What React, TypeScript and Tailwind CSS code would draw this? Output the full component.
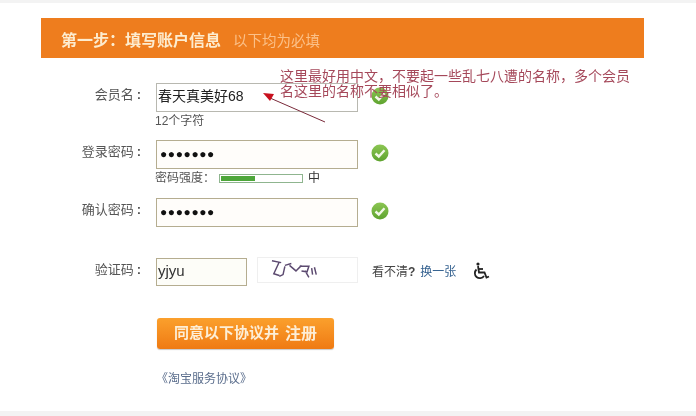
import React from "react";

const FONT = "font-['Liberation_Sans','Noto_Sans_CJK_SC',sans-serif]";

function CheckBadge() {
  return (
    <svg width="18" height="18" viewBox="0 0 18 18" className="ml-[13px] mt-[4px] shrink-0">
      <defs>
        <linearGradient id="okGreen" x1="0" y1="0" x2="0" y2="1">
          <stop offset="0" stopColor="#8cc653" />
          <stop offset="1" stopColor="#5ea32f" />
        </linearGradient>
      </defs>
      <circle cx="9" cy="9" r="8.5" fill="url(#okGreen)" />
      <path d="M4.5 9.5 L7.8 12.5 L13.5 6.3" fill="none" stroke="#f2f8e8" strokeWidth="2.4" />
    </svg>
  );
}

function Label({ text }: { text: string }) {
  return (
    <div className="mt-[2px] w-[100px] shrink-0 text-right text-[13px] leading-[20px] text-[#555]">
      {text}
      <span className="ml-[3px] font-bold">:</span>
    </div>
  );
}

function Field({ value, password, plain }: { value: string; password?: boolean; plain?: boolean }) {
  return (
    <div
      className={`ml-[15px] h-[29px] w-[202px] border pl-[1px] ${
        plain ? "border-[#b8b8b0] bg-white" : "border-[#b5ad90] bg-[#fffdfa]"
      }`}
    >
      {password ? (
        <span className="ml-[2px] text-[12px] leading-[22px] tracking-[0.6px] text-[#111]">{value}</span>
      ) : (
        <span className="text-[14px] leading-[19px] text-[#222]">{value}</span>
      )}
    </div>
  );
}

export default function App() {
  return (
    <div className={`relative flex h-[416px] w-[696px] flex-col overflow-hidden bg-white blur-[0.35px] ${FONT}`}>
      <div className="h-[3px] bg-[#f3f3f3]" />

      <div className="ml-[41px] mt-[15px] flex h-[40px] w-[603px] items-center bg-[#ee7d1e] pl-[20px] pt-[5px]">
        <span className="text-[16px] font-bold leading-[20px] text-[#fdeccf]">第一步：填写账户信息</span>
        <span className="ml-[12px] text-[14.5px] leading-[20px] text-[#fbc088]">以下均为必填</span>
      </div>

      <div className="ml-[41px] mt-[25px] flex items-start">
        <Label text="会员名" />
        <Field value="春天真美好68" plain />
        <CheckBadge />
      </div>
      <div className="ml-[155px] h-[18px] text-[12px] leading-[18px] text-[#555]">12个字符</div>

      <div className="ml-[41px] mt-[10px] flex items-start">
        <Label text="登录密码" />
        <Field value="●●●●●●●" password />
        <CheckBadge />
      </div>
      <div className="ml-[155px] mt-[1px] flex h-[16px] items-center text-[12px] text-[#555]">
        <span>密码强度：</span>
        <div className="ml-[4px] h-[9px] w-[84px] border border-[#8fb58f] bg-white p-px">
          <div className="h-full w-[43%] bg-[#4da63a]" />
        </div>
        <span className="ml-[5px] text-[#333]">中</span>
      </div>

      <div className="ml-[41px] mt-[12px] flex items-start">
        <Label text="确认密码" />
        <Field value="●●●●●●●" password />
        <CheckBadge />
      </div>

      <div className="ml-[41px] mt-[31px] flex items-start">
        <Label text="验证码" />
        <div className="ml-[15px] h-[28px] w-[91px] border border-[#b5ad90] bg-[#fdfdf8] pl-[1px]">
          <span className="text-[15px] leading-[22px] text-[#333]">yjyu</span>
        </div>
        <svg width="101" height="26" viewBox="0 0 101 26" className="-mt-[1px] ml-[10px] border border-[#efefef]">
          <path
            d="M12 3 L22 5 M20 4 L14 17 L20 19 M26 9 L24 18 L20 20 M26 8 L33 6 M31 8 L38 14 L44 8 M42 9 L52 9 L50 15 L44 14 M48 14 L52 21 M55 11 L56 18 M58 10 L60 18"
            fill="none"
            stroke="#5c4a70"
            strokeWidth="1.6"
          />
        </svg>
        <div className="ml-[14px] mt-[5px] text-[12px] leading-[18px] text-[#444]">
          看不清<span className="font-bold">?</span>
          <span className="ml-[5px] text-[#34618f]">换一张</span>
        </div>
        <svg width="18" height="18" viewBox="0 0 18 18" className="ml-[16px] mt-[4px]" fill="none" stroke="#222" strokeWidth="1.8">
          <circle cx="6" cy="2" r="1.6" fill="#222" stroke="none" />
          <path d="M6 4 L7 10.5 L12.5 10.5 L14.5 15.5 L17 14.5" />
          <path d="M6.5 7 L11 7" />
          <path d="M4.5 7.5 A5 5 0 1 0 12 14" />
        </svg>
      </div>

      <div className="ml-[157px] mt-[32px] flex h-[31px] w-[177px] items-center justify-center rounded-[3px] bg-gradient-to-b from-[#fba02c] to-[#ef7a12] font-bold text-[#fdeed6] shadow-[0_1px_1px_#c9c9c9]">
        <span className="text-[15px]">同意以下协议并</span>
        <span className="ml-[6px] text-[16px]">注册</span>
      </div>

      <div className="ml-[156px] mt-[22px] text-[12px] leading-[16px] text-[#5a6d8c]">《淘宝服务协议》</div>

      <div className="mt-auto h-[5px] bg-[#f3f3f3]" />

      {/* note written over the form */}
      <div className="absolute left-[280px] top-[69px] w-[352px] text-[14px] leading-[15px] text-[#a5485a]">
        这里最好用中文，不要起一些乱七八遭的名称，多个会员名这里的名称不要相似了。
      </div>
      <svg width="70" height="34" viewBox="0 0 70 34" className="absolute left-[260px] top-[93px]">
        <path d="M65 29 L10 5" stroke="#7a2a3a" strokeWidth="1" fill="none" />
        <path d="M3 0 L14 1 L10 8 Z" fill="#c8101e" />
      </svg>
    </div>
  );
}
